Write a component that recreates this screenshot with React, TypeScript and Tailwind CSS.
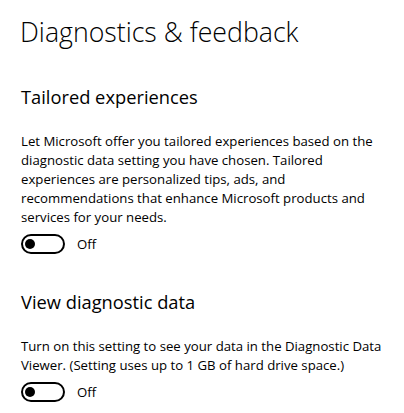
import { useState } from 'react'

const font = { fontFamily: '"Open Sans", "Noto Sans", sans-serif' }

export default function App() {
  const [tailored, setTailored] = useState(false)
  const [viewer, setViewer] = useState(false)

  return (
    <div
      className="min-h-[413px] w-[404px] bg-white pl-[21px] pr-[13px] text-black"
      style={font}
    >
      <h1 className="-ml-px pt-[13px] text-[26.7px] leading-[38px] font-light">
        Diagnostics &amp; feedback
      </h1>

      <Section
        title="Tailored experiences"
        text="Let Microsoft offer you tailored experiences based on the diagnostic data setting you have chosen. Tailored experiences are personalized tips, ads, and recommendations that enhance Microsoft products and services for your needs."
        on={tailored}
        onToggle={() => setTailored((v) => !v)}
        className="mt-[33px]"
      />

      <Section
        title="View diagnostic data"
        text="Turn on this setting to see your data in the Diagnostic Data Viewer. (Setting uses up to 1 GB of hard drive space.)"
        on={viewer}
        onToggle={() => setViewer((v) => !v)}
        className="mt-[35px]"
      />
    </div>
  )
}

interface SectionProps {
  title: string
  text: string
  on: boolean
  onToggle: () => void
  className?: string
}

function Section({ title, text, on, onToggle, className = '' }: SectionProps) {
  return (
    <section className={className}>
      <h2 className="text-[18.3px] leading-[26px] font-normal">{title}</h2>
      <p className="mt-[22px] text-[13.2px] leading-[19px]">{text}</p>
      <div className="mt-[7px] flex items-center gap-[12px]">
        <Toggle on={on} onClick={onToggle} />
        <span className="text-[13.2px] leading-[20px]">{on ? 'On' : 'Off'}</span>
      </div>
    </section>
  )
}

function Toggle({ on, onClick }: { on: boolean; onClick: () => void }) {
  return (
    <button
      type="button"
      role="switch"
      aria-checked={on}
      onClick={onClick}
      className={`flex h-[20px] w-[44px] items-center rounded-full border-2 px-[2px] ${
        on ? 'justify-end border-[#0078d7] bg-[#0078d7]' : 'justify-start border-black bg-white'
      }`}
    >
      <span className={`h-[10px] w-[10px] rounded-full ${on ? 'bg-white' : 'bg-black'}`} />
    </button>
  )
}
